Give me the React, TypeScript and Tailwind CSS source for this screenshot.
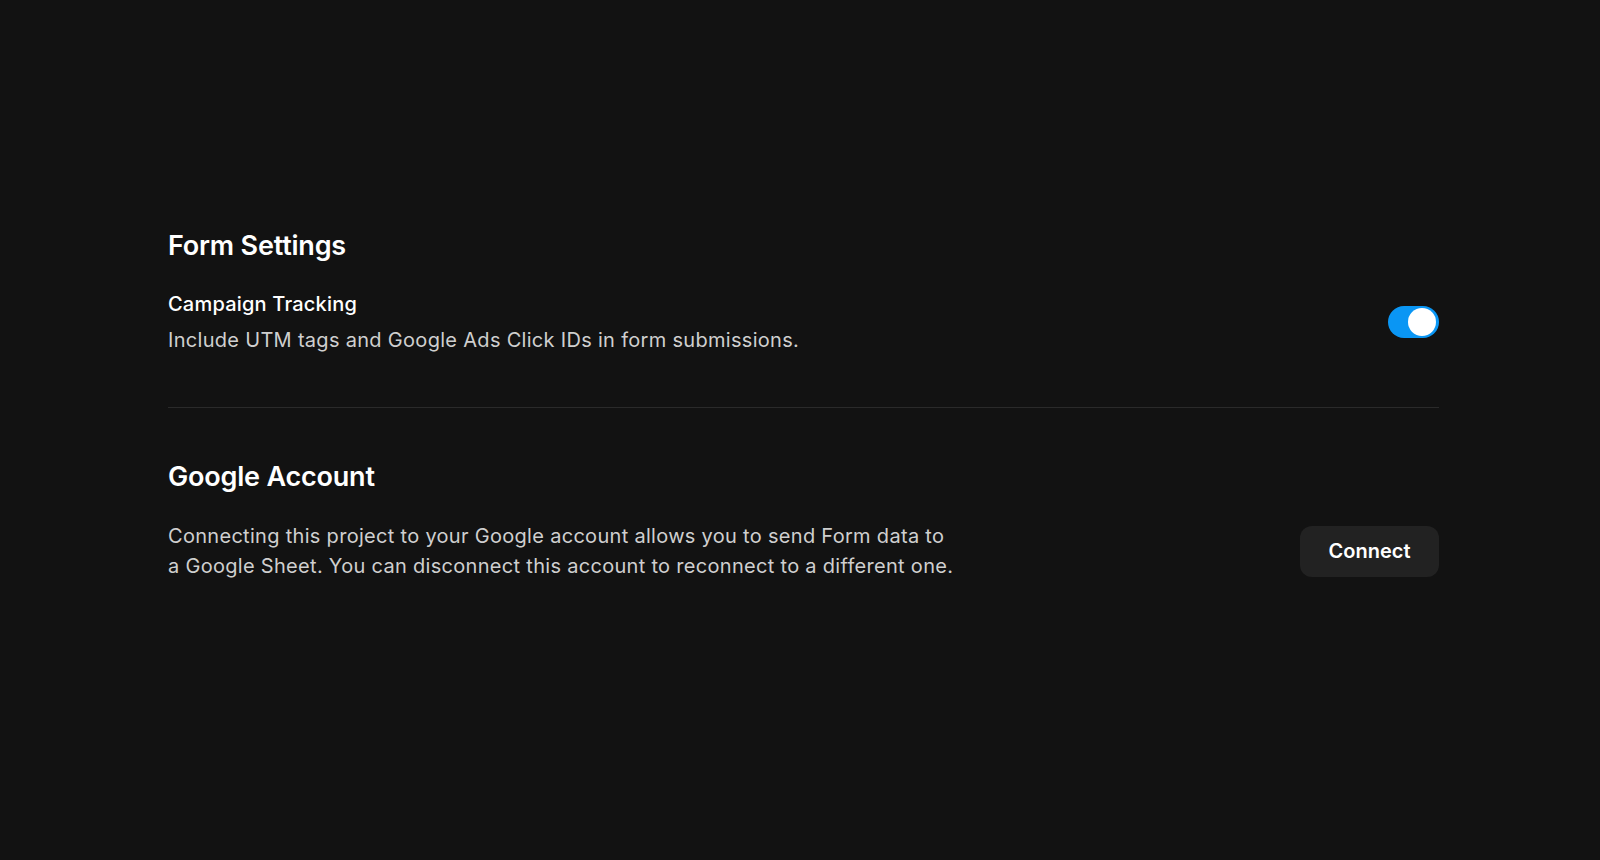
import React, { useState } from "react";

function Toggle({ on, onChange }: { on: boolean; onChange: (v: boolean) => void }) {
  return (
    <button
      type="button"
      onClick={() => onChange(!on)}
      className={`relative inline-flex h-[32px] w-[51px] shrink-0 items-center rounded-full transition-colors ${
        on ? "bg-[#0a96f4]" : "bg-[#3a3a3a]"
      }`}
    >
      <span
        className={`inline-block h-[28px] w-[28px] rounded-full bg-white transition-transform ${
          on ? "translate-x-[20px]" : "translate-x-[2px]"
        }`}
      />
    </button>
  );
}

export default function App() {
  const [tracking, setTracking] = useState(true);

  return (
    <div
      className="min-h-[860px] w-full bg-[#121212] text-white"
      style={{ fontFamily: "Inter, 'Noto Sans', sans-serif" }}
    >
      <div className="pl-[168px] pr-[161px] pt-[229px]">
        {/* Form settings */}
        <section className="border-b border-[#2a2a2a] pb-[53px]">
          <h2 className="text-[27px] font-semibold leading-[34px] tracking-[-0.2px]">
            Form Settings
          </h2>
          <div className="mt-[27px] flex items-center justify-between">
            <div>
              <div className="text-[20px] font-medium leading-[28px] tracking-[0.2px] text-white">
                Campaign Tracking
              </div>
              <p className="mt-[8px] text-[20px] leading-[28px] tracking-[0.3px] text-[#cfcfcf]">
                Include UTM tags and Google Ads Click IDs in form submissions.
              </p>
            </div>
            <Toggle on={tracking} onChange={setTracking} />
          </div>
        </section>

        {/* Google account */}
        <section className="pt-[52px]">
          <h2 className="text-[27px] font-semibold leading-[34px] tracking-[-0.2px]">
            Google Account
          </h2>
          <div className="mt-[27px] flex items-center justify-between">
            <p className="max-w-[820px] text-[20px] leading-[30px] tracking-[0.3px] text-[#cfcfcf]">
              Connecting this project to your Google account allows you to send Form data to
              <br />
              a Google Sheet. You can disconnect this account to reconnect to a different one.
            </p>
            <button
              type="button"
              className="h-[51px] w-[139px] rounded-[12px] bg-[#222222] text-[20px] font-semibold text-white"
            >
              Connect
            </button>
          </div>
        </section>
      </div>
    </div>
  );
}
